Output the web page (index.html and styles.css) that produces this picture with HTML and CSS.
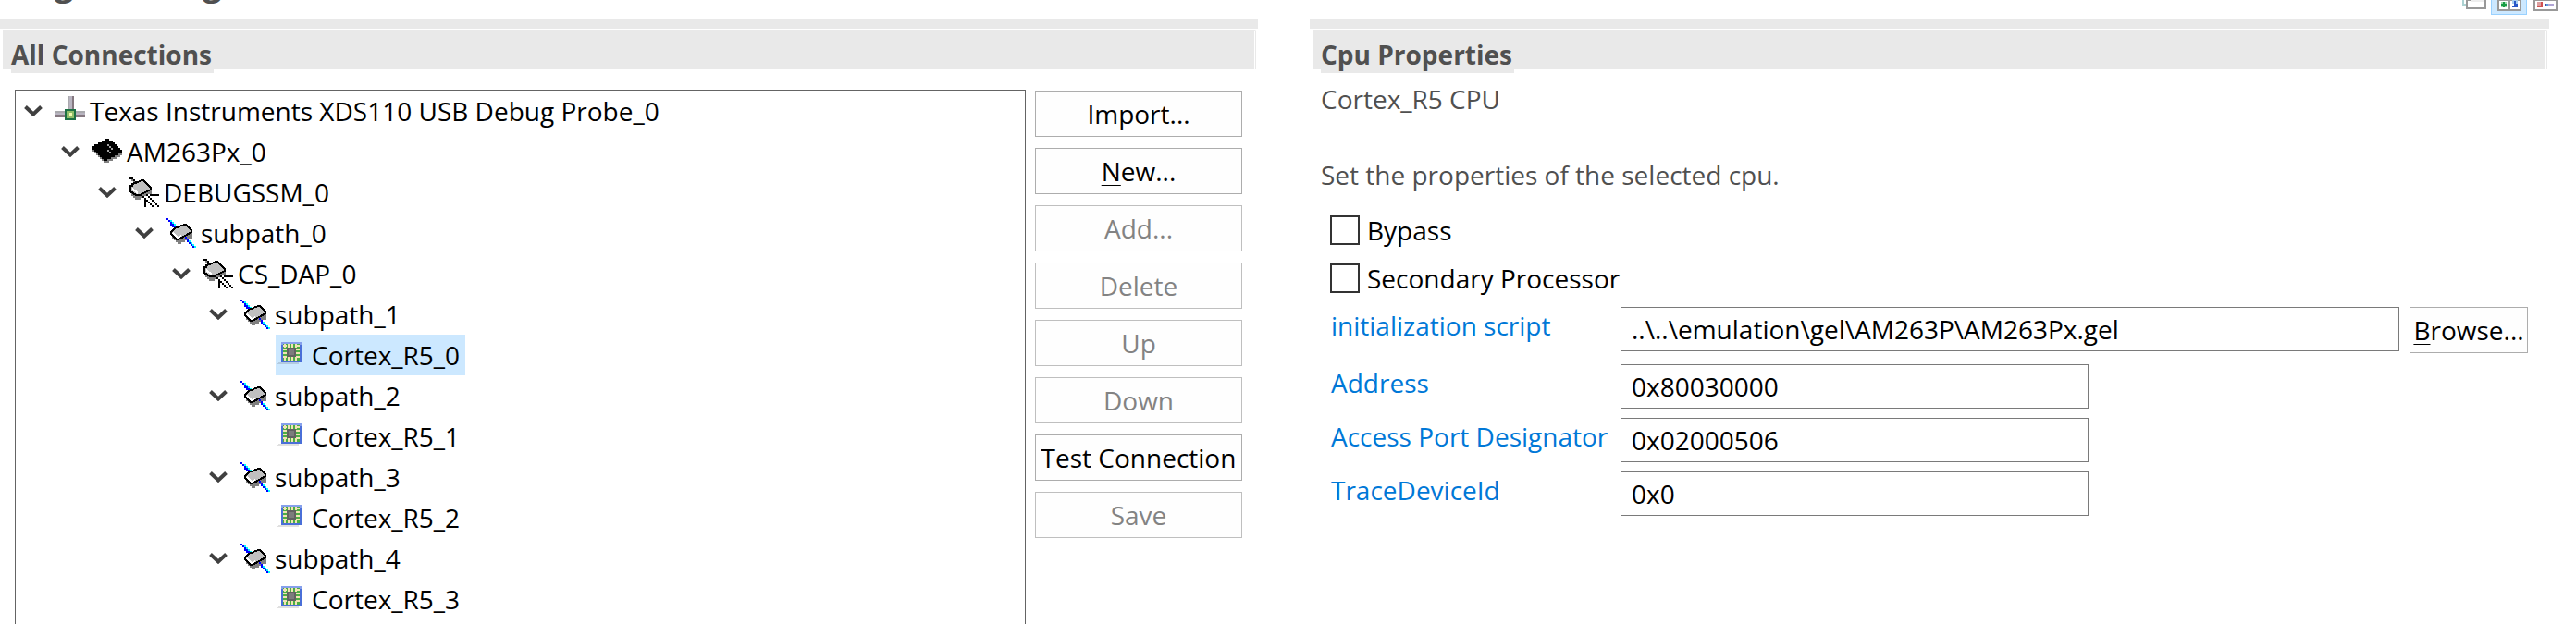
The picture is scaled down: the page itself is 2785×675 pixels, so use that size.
FILE: index.html
```html
<!DOCTYPE html>
<html lang="en">
<head>
<meta charset="utf-8">
<title>Target Configuration</title>
<link rel="stylesheet" href="styles.css">
</head>
<body>
<svg class="defs" aria-hidden="true">
  <symbol id="chevron" viewBox="0 0 20 12"><path d="M1.5 1.5 10 9.5l8.500-8" fill="none" stroke="#404040" stroke-width="4"/></symbol>
  <symbol id="probe" viewBox="0 0 16 16">
    <path d="M6.500 0h3v8h-3zM0 8h16v3H0z" fill="#b8b4c0"/>
    <path d="M9 0h1v8H9zM0 10h16v1.500H0z" fill="#857880"/>
    <path d="M0 8h16v1H0zM6.500 0h1v8h-1z" fill="#a9a9ad"/>
    <path d="M5.500 7.500h5v5h-5z" fill="#8fbf6a" stroke="#1d7044"/>
    <path d="M7.500 9h1.500v2H7.500z" fill="#f4f8b0"/>
  </symbol>
  <symbol id="device" viewBox="0 0 16 16">
    <path d="M0 6v2h1v1h1v1h1v1h1v1h1v1h1v1h3v-1h2v-1h2v-1h2v-1h1V7z" fill="#808080"/>
    <path d="M7 1h2v1h2v1h1v1h1v1h1v1h1v1h1v2h-2v1h-2v1h-2v1H8v1H6v-1H5v-1H4v-1H3V9H2V8H1V7H0V5h1V4h2V3h2V2h2z" fill="#000"/>
    <path d="M8 4h1v1h1v1h1v1h-1V6H9V5H8zM8 7h1v1h1v1H9V8H8z" fill="#a0a0a0"/>
  </symbol>
  <symbol id="router" viewBox="0 0 16 16">
    <path d="M0 0h2v1h1v1h1v1H3V2H2V1H0z" fill="#000"/>
    <path d="M1 1h1v1h1v1h1v1H2V2H1z" fill="#808080"/>
    <path d="M1 7v3h1v1h1v1h3v-1h2v-1h2V9h2V6z" fill="#808080"/>
    <path d="M.5 6.500v-2h1v-1l3-1 2-1h1l4 4v1l-6 3h-2l-3-2z" fill="#c0c0c0" stroke="#000"/>
    <path d="M1.500 6l3 2.500" fill="none" stroke="#fff"/>
    <path d="M6 9h1v1h1v1h1v1h1v1h1v1h1v1h1v1h-1v-1h-1v-1h-1v-1H9v-1H8v-1H7v-1H6zM9 9h1v1h1v1h1v1h1v1h1v1h1v1h1v1h-1v-1h-1v-1h-1v-1h-1v-1h-1v-1h-1v-1H9zM8 12h1v4H8zM11 9h5v1h-5z" fill="#000"/>
  </symbol>
  <symbol id="subpath" viewBox="0 0 16 16">
    <path d="M0 0h1v1h1v1h1v1h1v1h1v1H3V4H2V2H1V1H0zM10 11h1v1h1v1h1v1h1v1h1v1h-1v-1h-1v-1h-1v-1h-1v-1h-1z" fill="#00f"/>
    <path d="M2 1h1v1H2zM3 2h1v1H3zM4 3h1v1H4zM5 4h1v1H5zM11 11h1v1h-1zM12 12h1v1h-1zM13 13h1v1h-1zM14 14h1v1h-1zM15 15h1v1h-1z" fill="#0ff"/>
    <path d="M3 9v2h1v1h1v1h1v1h2v-1h2v-1h2v-1h2V7z" fill="#808080"/>
    <path d="M2.500 8.500v-1l2-2 5-2h1l3 3v1l-7 4h-1z" fill="#c0c0c0" stroke="#000"/>
    <path d="M3.500 8l2.500 2.500 2-1" fill="none" stroke="#fff"/>
    <path d="M10 10h1v1h-1zM11 11h1v1h-1z" fill="#00f"/>
  </symbol>
  <symbol id="cpu" viewBox="0 0 32 32">
    <path d="M1 24h22v2H0z" fill="#000" opacity=".12"/>
    <path d="M4 2h22v22H4z" fill="#4a6fd8"/>
    <path d="M4 2h22v3H4z" fill="#86a0ec"/>
    <path d="M6 4h18v18H6z" fill="#4cae44"/>
    <path d="M7 6h16M7 20h16" stroke="#f1e3b4" stroke-width="4" stroke-dasharray="2 2"/>
    <path d="M8 5v16M22 5v16" stroke="#f1e3b4" stroke-width="4" stroke-dasharray="2 2"/>
    <path d="M10 8h10v10H10z" fill="#626262"/>
    <path d="M12 10h6v6h-6z" fill="#7c7c7c"/>
  </symbol>
</svg>

<header class="form-head">
  <h1>Target Configuration</h1>
  <div class="tools">
    <button class="tool" aria-label="Restore layout"><svg viewBox="0 0 30 12"><path d="M3 0h2v4h2v2H3z" fill="#acd2d2"/><path d="M8 0h20v9H8z" fill="#fff" stroke="#999" stroke-width="2"/><path d="M13 0h14v2H13z" fill="#eee"/></svg></button>
    <button class="tool active" aria-label="Horizontal orientation"><svg viewBox="0 0 30 12"><path d="M3 0h24v11H3zM15 0v11" fill="#fff" stroke="#999" stroke-width="2"/><path d="M6 2h6v6H6z" fill="#9bd8ac"/><path d="M8 2h2v2h2v2h-2v2H8V6H6V4h2z" fill="#189c44"/><path d="M18 0h6v4h-6z" fill="#a6ceee"/><path d="M20 1h2v3h2v4h-6V6h2z" fill="#2858c8"/></svg></button>
    <button class="tool" aria-label="Vertical orientation"><svg viewBox="0 0 30 12"><path d="M3 0h24v11H3z" fill="#fff" stroke="#999" stroke-width="2"/><path d="M6 2h6v6H6z" fill="#d05050"/><path d="M6 2h4v4H6z" fill="#dda0a0"/><path d="M14 4h10v2H14z" fill="#b0a4d4"/><path d="M14 4h2v2h-2z" fill="#5048a0"/><path d="M16 4h2v2h-2z" fill="#58a0d8"/></svg></button>
  </div>
</header>

<main class="columns">
  <section class="panel">
    <div class="rule"></div>
    <div class="title-frame"><div class="title-bar"><h2>All Connections</h2></div></div>
    <div class="connections">
      <ul class="tree" role="tree">
        <li><div class="row"><button class="twisty" aria-label="Collapse"><svg><use href="#chevron"/></svg></button><span class="node"><svg class="icon"><use href="#probe"/></svg>Texas Instruments XDS110 USB Debug Probe_0</span></div>
          <ul>
            <li><div class="row"><button class="twisty" aria-label="Collapse"><svg><use href="#chevron"/></svg></button><span class="node"><svg class="icon"><use href="#device"/></svg>AM263Px_0</span></div>
              <ul>
                <li><div class="row"><button class="twisty" aria-label="Collapse"><svg><use href="#chevron"/></svg></button><span class="node"><svg class="icon"><use href="#router"/></svg>DEBUGSSM_0</span></div>
                  <ul>
                    <li><div class="row"><button class="twisty" aria-label="Collapse"><svg><use href="#chevron"/></svg></button><span class="node"><svg class="icon"><use href="#subpath"/></svg>subpath_0</span></div>
                      <ul>
                        <li><div class="row"><button class="twisty" aria-label="Collapse"><svg><use href="#chevron"/></svg></button><span class="node"><svg class="icon"><use href="#router"/></svg>CS_DAP_0</span></div>
                          <ul>
                            <li><div class="row"><button class="twisty" aria-label="Collapse"><svg><use href="#chevron"/></svg></button><span class="node"><svg class="icon"><use href="#subpath"/></svg>subpath_1</span></div>
                              <ul><li><div class="row leaf"><span class="node selected"><svg class="icon"><use href="#cpu"/></svg>Cortex_R5_0</span></div></li></ul></li>
                            <li><div class="row"><button class="twisty" aria-label="Collapse"><svg><use href="#chevron"/></svg></button><span class="node"><svg class="icon"><use href="#subpath"/></svg>subpath_2</span></div>
                              <ul><li><div class="row leaf"><span class="node"><svg class="icon"><use href="#cpu"/></svg>Cortex_R5_1</span></div></li></ul></li>
                            <li><div class="row"><button class="twisty" aria-label="Collapse"><svg><use href="#chevron"/></svg></button><span class="node"><svg class="icon"><use href="#subpath"/></svg>subpath_3</span></div>
                              <ul><li><div class="row leaf"><span class="node"><svg class="icon"><use href="#cpu"/></svg>Cortex_R5_2</span></div></li></ul></li>
                            <li><div class="row"><button class="twisty" aria-label="Collapse"><svg><use href="#chevron"/></svg></button><span class="node"><svg class="icon"><use href="#subpath"/></svg>subpath_4</span></div>
                              <ul><li><div class="row leaf"><span class="node"><svg class="icon"><use href="#cpu"/></svg>Cortex_R5_3</span></div></li></ul></li>
                          </ul></li>
                      </ul></li>
                  </ul></li>
              </ul></li>
          </ul></li>
      </ul>
      <div class="actions">
        <button class="btn"><u>I</u>mport...</button>
        <button class="btn"><u>N</u>ew...</button>
        <button class="btn" disabled>Add...</button>
        <button class="btn" disabled>Delete</button>
        <button class="btn" disabled>Up</button>
        <button class="btn" disabled>Down</button>
        <button class="btn">Test Connection</button>
        <button class="btn" disabled>Save</button>
      </div>
    </div>
  </section>

  <section class="panel">
    <div class="rule"></div>
    <div class="title-frame"><div class="title-bar"><h2>Cpu Properties</h2></div></div>
    <div class="properties">
      <p class="kind">Cortex_R5 CPU</p>
      <p class="hint">Set the properties of the selected cpu.</p>
      <label class="check"><input type="checkbox">Bypass</label>
      <label class="check"><input type="checkbox">Secondary Processor</label>
      <div class="fields">
        <label for="script">initialization script</label>
        <div class="file"><input class="text" id="script" type="text" value="..\..\emulation\gel\AM263P\AM263Px.gel"><button class="btn browse"><u>B</u>rowse...</button></div>
        <label for="address">Address</label>
        <input class="text short" id="address" type="text" value="0x80030000">
        <label for="port">Access Port Designator</label>
        <input class="text short" id="port" type="text" value="0x02000506">
        <label for="trace">TraceDeviceId</label>
        <input class="text short" id="trace" type="text" value="0x0">
      </div>
    </div>
  </section>
</main>
</body>
</html>
```
FILE: styles.css
```css
* { box-sizing: border-box; }

body {
  margin: 0;
  height: 100vh;
  display: flex;
  flex-direction: column;
  overflow: hidden;
  background: #fff;
  color: #000;
  font: 28px/40px "Open Sans", "Noto Sans", sans-serif;
}

button, input { font: inherit; color: inherit; }
h1, h2, p, ul { margin: 0; padding: 0; }
ul { list-style: none; }
.defs { display: none; }

.form-head {
  flex: none;
  display: flex;
  justify-content: space-between;
  align-items: flex-end;
  height: 21px;
  padding-right: 14px;
  overflow: hidden;
}
.form-head h1 {
  padding-bottom: 15px;
  font-size: 36px;
  line-height: 48px;
  color: #505050;
}
.tools { display: flex; align-self: flex-start; }
.tool {
  display: flex;
  justify-content: center;
  width: 39px;
  height: 16px;
  padding: 0;
  border: 1px solid transparent;
  border-top: 0;
  background: none;
}
.tool svg { width: 30px; height: 12px; }
.tool.active { background: #cce8ff; border-color: #99d1ff; }

.columns {
  flex: 1;
  min-height: 0;
  display: grid;
  grid-template-columns: 1360fr 1340fr;
  column-gap: 56px;
  padding-right: 29px;
}
.panel { display: flex; flex-direction: column; min-width: 0; min-height: 0; }
.rule { flex: none; height: 10px; background: #e9e9e9; }
.title-frame {
  flex: none;
  margin: 1px 2px 0 3px;
  padding: 1px 1px 0 0;
  border: solid #e9e9e9;
  border-width: 1px 1px 0 0;
  border-top-right-radius: 2px;
}
.title-bar { display: flex; height: 41px; padding: 5px 9px 0; background: #e9e9e9; }
h2 {
  height: 40px;
  padding-right: 2px;
  font-size: 28px;
  line-height: 40px;
  color: #505050;
  background: #e9e9e9;
}

.connections {
  flex: 1;
  min-height: 0;
  display: flex;
  gap: 10px;
  padding: 22px 17px 0 16px;
}
.tree {
  flex: 1;
  padding-left: 9px;
  border: 1px solid #646464;
  border-bottom: 0;
  overflow: hidden;
}
.tree ul { padding-left: 40px; }
.row { display: flex; align-items: center; gap: 12px; height: 44px; }
.row.leaf { padding-left: 32px; }
.twisty { flex: none; display: flex; width: 20px; height: 12px; padding: 0; border: 0; background: none; }
.twisty svg { width: 20px; height: 12px; }
.node {
  display: flex;
  align-items: center;
  gap: 5px;
  height: 44px;
  padding: 0 6px 0 2px;
  white-space: nowrap;
}
.node.selected { background: #cce8ff; }
.icon { flex: none; width: 32px; height: 32px; shape-rendering: crispEdges; }

.actions { display: flex; flex-direction: column; gap: 12px; width: 224px; padding-top: 1px; }
.btn {
  height: 50px;
  padding: 0;
  border: 1px solid #adadad;
  background: #fefefe;
  text-align: center;
  white-space: nowrap;
}
.btn:disabled { border-color: #bfbfbf; color: #838383; }
.btn u { text-decoration-thickness: 1px; text-underline-offset: 4px; }

.properties { padding: 12px 23px 0 12px; }
.kind, .hint { color: #505050; }
.hint { margin-top: 42px; padding-bottom: 14px; }
.check { display: flex; align-items: center; gap: 8px; height: 52px; padding-left: 10px; }
.check input {
  appearance: none;
  width: 32px;
  height: 32px;
  margin: 0;
  border: 2px solid #333;
  background: #fff;
}
.fields {
  display: grid;
  grid-template-columns: 313px 1fr;
  row-gap: 10px;
  padding: 5px 0 0 11px;
}
.fields label { color: #0078d7; white-space: nowrap; }
.file { display: flex; gap: 11px; margin-bottom: 2px; }
.file .text { flex: 1; min-width: 0; }
.browse { width: 128px; }
.text {
  height: 48px;
  padding: 0 11px;
  border: 1px solid #7a7a7a;
  background: #fff;
}
.text.short { width: 506px; }
```
